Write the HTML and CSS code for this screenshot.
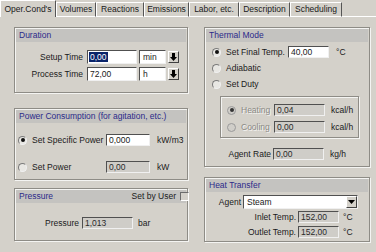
FILE: index.html
```html
<!DOCTYPE html>
<html>
<head>
<meta charset="utf-8">
<link rel="stylesheet" href="styles.css">
</head>
<body>
<div class="tabs">
  <div class="tab active t1">Oper.Cond's</div>
  <div class="tab t2">Volumes</div>
  <div class="tab t3">Reactions</div>
  <div class="tab t4">Emissions</div>
  <div class="tab t5">Labor, etc.</div>
  <div class="tab t6">Description</div>
  <div class="tab t7">Scheduling</div>
  <div class="tabfill"></div>
</div>
<div class="panel">
  <div class="col col-left">
    <div class="group g-duration">
      <div class="ghead">Duration</div>
      <div class="dur-rows">
        <div class="row">
          <span class="lbl lbl-dur">Setup Time</span>
          <span class="inp i-dur"><span class="hl">0,00</span></span>
          <span class="unit">min</span>
          <span class="spin"><svg width="7" height="8" viewBox="0 0 7 8"><path d="M2 0h3v4h2L3.5 8 0 4h2z" fill="#000"/></svg></span>
        </div>
        <div class="row">
          <span class="lbl lbl-dur">Process Time</span>
          <span class="inp i-dur">72,00</span>
          <span class="unit">h</span>
          <span class="spin"><svg width="7" height="8" viewBox="0 0 7 8"><path d="M2 0h3v4h2L3.5 8 0 4h2z" fill="#000"/></svg></span>
        </div>
      </div>
    </div>
    <div class="group g-power">
      <div class="ghead">Power Consumption (for agitation, etc.)</div>
      <div class="pow-rows">
        <div class="row">
          <span class="radio on"></span>
          <span class="rlbl rlbl-pow">Set Specific Power</span>
          <span class="inp i-pow">0,000</span>
          <span class="after">kW/m3</span>
        </div>
        <div class="row row-pow2">
          <span class="radio"></span>
          <span class="rlbl rlbl-pow">Set Power</span>
          <span class="inp dis i-pow">0,00</span>
          <span class="after">kW</span>
        </div>
      </div>
    </div>
    <div class="group g-press">
      <div class="ghead ghead-split"><span>Pressure</span><span class="sbu">Set by User <span class="check"></span></span></div>
      <div class="press-row row">
        <span class="lbl lbl-press">Pressure</span>
        <span class="inp dis i-press">1,013</span>
        <span class="after after-bar">bar</span>
      </div>
    </div>
  </div>
  <div class="col col-right">
    <div class="group g-thermal">
      <div class="ghead">Thermal Mode</div>
      <div class="row th-row1">
        <span class="radio on"></span>
        <span class="rlbl rlbl-th">Set Final Temp.</span>
        <span class="inp i-th">40,00</span>
        <span class="after after-c">°C</span>
      </div>
      <div class="row th-row">
        <span class="radio"></span>
        <span class="rlbl">Adiabatic</span>
      </div>
      <div class="row th-row">
        <span class="radio"></span>
        <span class="rlbl">Set Duty</span>
      </div>
      <div class="inner">
        <div class="row">
          <span class="radio on dim"></span>
          <span class="rlbl etched rlbl-in">Heating</span>
          <span class="inp dis i-in">0,04</span>
          <span class="after after-k">kcal/h</span>
        </div>
        <div class="row in-row2">
          <span class="radio dim"></span>
          <span class="rlbl etched rlbl-in">Cooling</span>
          <span class="inp dis i-in">0,00</span>
          <span class="after after-k">kcal/h</span>
        </div>
      </div>
      <div class="row ar-row">
        <span class="lbl lbl-ar">Agent Rate</span>
        <span class="inp dis i-in">0,00</span>
        <span class="after after-k">kg/h</span>
      </div>
    </div>
    <div class="group g-heat">
      <div class="ghead">Heat Transfer</div>
      <div class="row agent-row">
        <span class="lbl lbl-agent">Agent</span>
        <span class="combo">Steam<span class="cbtn"><svg width="7" height="4" viewBox="0 0 7 4"><path d="M0 0h7L3.5 4z" fill="#000"/></svg></span></span>
      </div>
      <div class="row temp-row">
        <span class="lbl lbl-temp">Inlet Temp.</span>
        <span class="inp dis i-temp">152,00</span>
        <span class="after after-t">°C</span>
      </div>
      <div class="row temp-row2">
        <span class="lbl lbl-temp">Outlet Temp.</span>
        <span class="inp dis i-temp">152,00</span>
        <span class="after after-t">°C</span>
      </div>
    </div>
  </div>
</div>
</body>
</html>
```
FILE: styles.css
```css
html, body {
  margin: 0;
  padding: 0;
  background: #d4d1ca;
  width: 376px;
  height: 252px;
  overflow: hidden;
  font-family: "Liberation Sans", Arial, sans-serif;
  font-size: 8.5px;
  color: #1a1a1a;
}

.tabs {
  display: flex;
  align-items: flex-end;
  height: 17px;
}
.tab {
  box-sizing: border-box;
  height: 15px;
  border-top: 1px solid #fff;
  border-left: 1px solid #fff;
  border-right: 1px solid #555;
  border-bottom: 1px solid #fff;
  text-align: center;
  line-height: 13px;
  white-space: nowrap;
  font-size: 8.5px;
}
.tab.active {
  height: 17px;
  border-bottom: none;
  line-height: 16px;
}
.t1 { width: 56px; }
.t2 { width: 40px; }
.t3 { width: 48px; }
.t4 { width: 45px; }
.t5 { width: 50px; }
.t6 { width: 51px; }
.t7 { width: 52px; }
.tabfill {
  flex: 1;
  height: 1px;
  background: #fff;
}

.panel {
  display: flex;
  padding: 10px 0 0 14px;
  gap: 16px;
  height: 225px;
  width: 358px;
}
.col {
  display: flex;
  flex-direction: column;
}
.col-left { width: 174px; }
.col-right { width: 166px; }

.group {
  box-sizing: border-box;
  border: 1px solid #8e8c86;
  box-shadow: inset 1px 1px 0 #f4f4f2, 1px 1px 0 #f4f4f2;
  display: flex;
  flex-direction: column;
}
.ghead {
  height: 13px;
  margin: 1px 1px 0 1px;
  background: #c4c3c0;
  color: #2b2a8a;
  line-height: 13px;
  padding-left: 3px;
}
.ghead-split {
  display: flex;
  justify-content: space-between;
  padding-right: 0;
}
.sbu {
  display: flex;
  align-items: center;
  color: #1a1a1a;
  gap: 4px;
}
.check {
  display: inline-block;
  box-sizing: border-box;
  width: 9px;
  height: 9px;
  border-top: 1px solid #6c6c6c;
  border-left: 1px solid #6c6c6c;
  border-bottom: 1px solid #fff;
  border-right: 1px solid #fff;
  background: #d4d1ca;
  margin-right: -3px;
}

.g-duration { height: 66px; }
.g-power { height: 72px; margin-top: 15px; }
.g-press { height: 53px; margin-top: 8px; }
.g-thermal { height: 140px; }
.g-heat { height: 65px; margin-top: 10px; }

.row {
  display: flex;
  align-items: center;
  height: 14px;
  white-space: nowrap;
}
.dur-rows { margin-top: 8px; display: flex; flex-direction: column; gap: 3px; }
.lbl { text-align: right; }
.lbl-dur { width: 68px; margin-right: 4px; }

.inp {
  box-sizing: border-box;
  height: 13px;
  background: #fff;
  border-top: 1px solid #505050;
  border-left: 1px solid #505050;
  border-bottom: 1px solid #f0f0f0;
  border-right: 1px solid #f0f0f0;
  line-height: 11px;
  padding-left: 2px;
  display: inline-block;
}
.inp.dis { background: #cfcdc8; color: #2a2a2a; }
.hl { background: #0a246a; color: #fff; padding: 0 1px; margin-left: -1px; }
.i-dur { width: 50px; height: 14px; line-height: 12px; }
.unit {
  box-sizing: border-box;
  width: 27px;
  height: 14px;
  margin-left: 2px;
  background: #fff;
  border-top: 1px solid #505050;
  border-left: 1px solid #505050;
  border-bottom: 1px solid #f0f0f0;
  border-right: 1px solid #f0f0f0;
  padding-left: 3px;
  line-height: 12px;
}
.spin {
  box-sizing: border-box;
  width: 11px;
  height: 12px;
  margin-left: 2px;
  background: #d4d1ca;
  border-top: 1px solid #fff;
  border-left: 1px solid #fff;
  border-right: 1px solid #404040;
  border-bottom: 1px solid #404040;
  display: flex;
  align-items: center;
  justify-content: center;
}

.radio {
  box-sizing: border-box;
  width: 9px;
  height: 9px;
  border-radius: 50%;
  border: 1px solid #7a7a7a;
  border-right-color: #f0f0f0;
  border-bottom-color: #f0f0f0;
  background: #e8e7e3;
  position: relative;
  flex: none;
}
.radio.on::after {
  content: "";
  position: absolute;
  left: 1.5px;
  top: 1.5px;
  width: 4px;
  height: 4px;
  border-radius: 50%;
  background: #111;
}
.radio.dim { background: #d0cec9; border-color: #9a9a9a; }
.radio.dim.on::after { background: #333; }

.rlbl { margin-left: 4px; }
.etched { color: #8a8984; text-shadow: 1px 1px 0 #f4f4f2; }
.after { margin-left: 7px; }

.pow-rows { margin-top: 10px; padding-left: 3px; display: flex; flex-direction: column; }
.rlbl-pow { width: 74px; margin-left: 5px; }
.i-pow { width: 44px; height: 12px; }
.row-pow2 { margin-top: 13px; }

.press-row { margin-top: 13px; }
.lbl-press { width: 64px; margin-right: 3px; }
.i-press { width: 51px; height: 12px; }
.after-bar { margin-left: 5px; }

.th-row1 { margin-top: 3px; padding-left: 7px; }
.rlbl-th { width: 62px; margin-left: 5px; }
.i-th { width: 41px; height: 12px; }
.after-c { margin-left: 7px; }
.th-row { padding-left: 7px; margin-top: 2px; }
.th-row .rlbl { margin-left: 5px; }

.inner {
  margin: 5px 10px 0 15px;
  height: 42px;
  box-sizing: border-box;
  border: 1px solid #8e8c86;
  box-shadow: inset 1px 1px 0 #f4f4f2, 1px 1px 0 #f4f4f2;
  padding: 6px 0 0 6px;
}
.rlbl-in { width: 29px; margin-left: 5px; margin-right: 4px; }
.i-in { width: 51px; height: 12px; }
.after-k { margin-left: 6px; }
.in-row2 { margin-top: 3px; }

.ar-row { margin-top: 9px; }
.lbl-ar { width: 66px; margin-right: 2px; }

.agent-row { margin-top: 2px; height: 15px; }
.lbl-agent { width: 36px; margin-right: 2px; }
.combo {
  box-sizing: border-box;
  width: 115px;
  height: 14px;
  background: #fff;
  border-top: 1px solid #505050;
  border-left: 1px solid #505050;
  border-bottom: 1px solid #f0f0f0;
  border-right: 1px solid #f0f0f0;
  padding-left: 3px;
  line-height: 12px;
  display: flex;
  justify-content: space-between;
}
.cbtn {
  box-sizing: border-box;
  width: 11px;
  height: 12px;
  background: #d4d1ca;
  border-top: 1px solid #fff;
  border-left: 1px solid #fff;
  border-right: 1px solid #404040;
  border-bottom: 1px solid #404040;
  display: flex;
  align-items: center;
  justify-content: center;
}
.temp-row { margin-top: 1px; height: 13px; }
.temp-row2 { margin-top: 2px; height: 13px; }
.lbl-temp { width: 91px; margin-right: 2px; }
.i-temp { width: 41px; height: 12px; }
.after-t { margin-left: 4px; }
```
